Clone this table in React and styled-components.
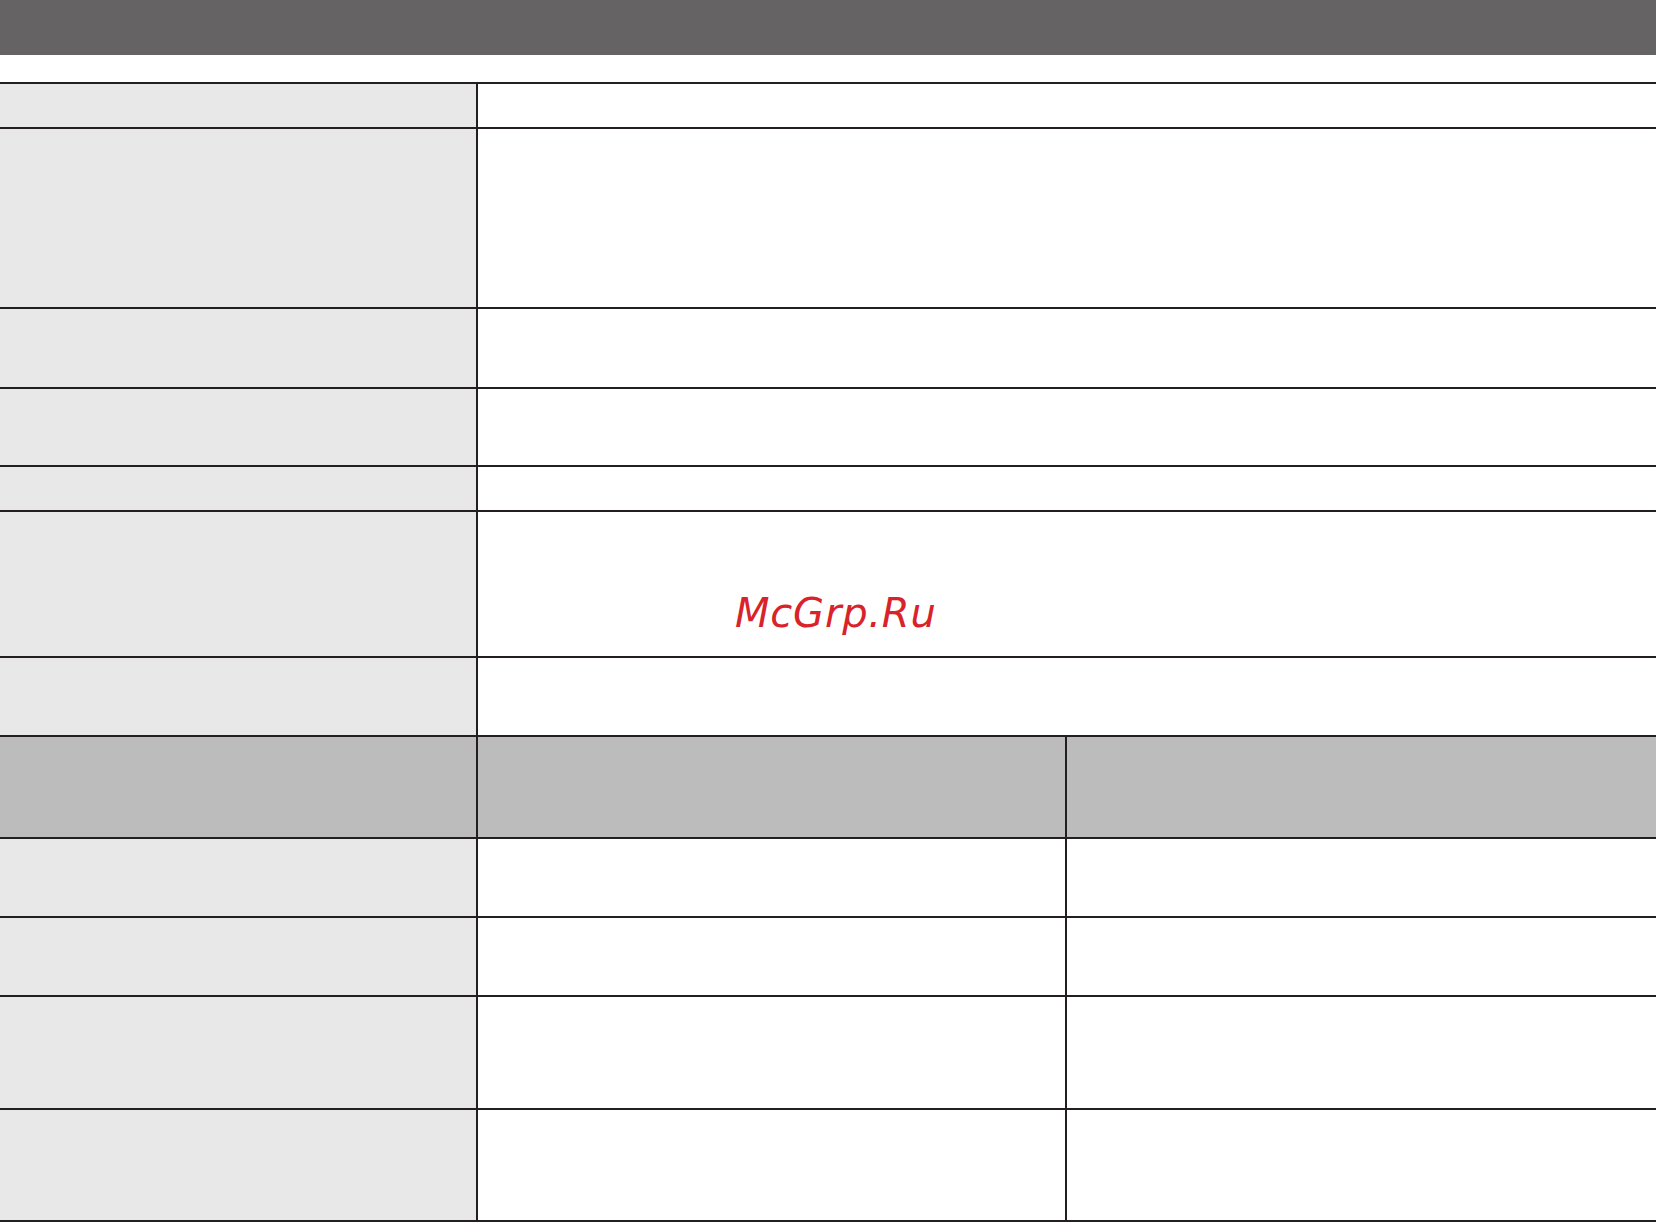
import styled, { createGlobalStyle } from "styled-components";

const GlobalStyle = createGlobalStyle`
  html, body {
    margin: 0;
    padding: 0;
    background: #ffffff;
    font-family: "DejaVu Sans", sans-serif;
  }
  * {
    box-sizing: border-box;
  }
`;

const Page = styled.div`
  position: relative;
  width: 1656px;
  height: 1222px;
  overflow: hidden;
  background: #ffffff;
`;

const TopBar = styled.div`
  height: 55px;
  background: #656364;
`;

const Gap = styled.div`
  height: 27px;
`;

const Table = styled.div`
  display: flex;
  flex-direction: column;
  border-bottom: 2px solid #231f20;
`;

const Row = styled.div`
  display: grid;
  grid-template-columns: ${(p) => (p.$split ? "478px 589px 1fr" : "478px 1fr")};
  height: ${(p) => p.$h}px;
  border-top: 2px solid #231f20;
`;

const Cell = styled.div`
  background: ${(p) => p.$bg || "#ffffff"};
  border-right: ${(p) => (p.$last ? "none" : "2px solid #231f20")};
`;

const Watermark = styled.div`
  position: absolute;
  left: 735px;
  top: 593px;
  font-family: "DejaVu Sans", sans-serif;
  font-style: oblique;
  font-size: 40px;
  line-height: 40px;
  color: #d9232a;
  letter-spacing: 0.8px;
`;

const singleRows = [45, 180, 80, 78, 45, 146, 79];
const splitRows = [102, 79, 79, 113, 112];

const App = () => {
  return (
    <>
      <GlobalStyle />
      <Page>
        <TopBar />
        <Gap />
        <Table>
          {singleRows.map((h, i) => (
            <Row key={"s" + i} $h={h}>
              <Cell $bg="#e8e8e8" />
              <Cell $last />
            </Row>
          ))}
          {splitRows.map((h, i) => (
            <Row key={"p" + i} $h={h} $split>
              <Cell $bg={i === 0 ? "#bcbcbc" : "#e8e8e8"} />
              <Cell $bg={i === 0 ? "#bcbcbc" : "#ffffff"} />
              <Cell $bg={i === 0 ? "#bcbcbc" : "#ffffff"} $last />
            </Row>
          ))}
        </Table>
        <Watermark>McGrp.Ru</Watermark>
      </Page>
    </>
  );
};

export default App;
